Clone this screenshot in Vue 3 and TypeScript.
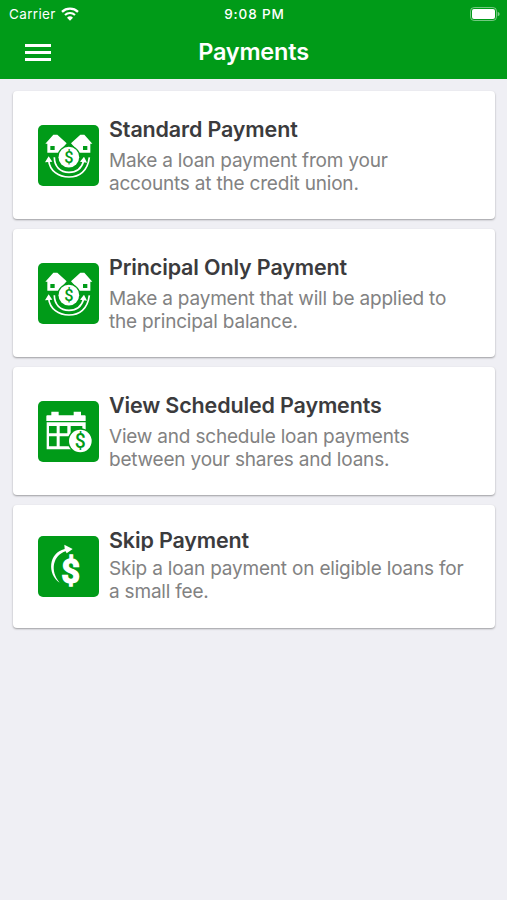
<script setup lang="ts">
type IconName = 'houses' | 'calendar' | 'skip'

interface PaymentOption {
  title: string
  lines: string[]
  icon: IconName
  compact?: boolean
}

const options: PaymentOption[] = [
  {
    title: 'Standard Payment',
    lines: ['Make a loan payment from your', 'accounts at the credit union.'],
    icon: 'houses',
  },
  {
    title: 'Principal Only Payment',
    lines: ['Make a payment that will be applied to', 'the principal balance.'],
    icon: 'houses',
  },
  {
    title: 'View Scheduled Payments',
    lines: ['View and schedule loan payments', 'between your shares and loans.'],
    icon: 'calendar',
  },
  {
    title: 'Skip Payment',
    lines: ['Skip a loan payment on eligible loans for', 'a small fee.'],
    icon: 'skip',
    compact: true,
  },
]
</script>

<template>
  <div class="screen">
    <header class="header">
      <div class="status">
        <div class="carrier">
          <span>Carrier</span>
          <svg class="wifi" viewBox="0 0 54 42">
            <path d="M3 14.5A35 35 0 0 1 51 14.5" fill="none" stroke="#fff" stroke-width="7" />
            <path d="M12 24A22 22 0 0 1 42 24" fill="none" stroke="#fff" stroke-width="6.5" />
            <path d="M27 41 18 32A13 13 0 0 1 36 32Z" fill="#fff" />
          </svg>
        </div>
        <span class="time">9:08 PM</span>
        <div class="power">
          <svg class="battery" viewBox="0 0 90 42">
            <rect x="1.5" y="1.5" width="78" height="39" rx="11" fill="none" stroke="#fff" stroke-opacity=".45" stroke-width="3" />
            <rect x="6" y="6" width="69" height="30" rx="6" fill="#fff" />
            <path d="M83 14q6 2 6 7t-6 7Z" fill="#fff" fill-opacity=".5" />
          </svg>
        </div>
      </div>
      <div class="navbar">
        <button class="menu" aria-label="Menu"><i /><i /><i /></button>
        <h1>Payments</h1>
        <span />
      </div>
    </header>

    <main class="list">
      <article v-for="option in options" :key="option.title" class="card" :class="{ compact: option.compact }">
        <svg class="tile" viewBox="0 0 183 183">
          <rect width="183" height="183" rx="15" fill="#009b18" />
          <g v-if="option.icon === 'houses'">
            <g v-for="side in 2" :key="side" :transform="side === 2 ? 'translate(185 0) scale(-1 1)' : undefined">
              <path d="M22 56 46 29H58L86 55 76 66V83H28V56Z" fill="#fff" />
              <rect x="37" y="63" width="13" height="12" fill="#009b18" />
            </g>
            <circle cx="92.500" cy="96.500" r="35" fill="#009b18" />
            <path d="M32 106C35 138 62 156 93 156S149 138 154 97" fill="none" stroke="#fff" stroke-width="5" />
            <path d="M49 97C49 125 67 142 93 142S132 126 137 108" fill="none" stroke="#fff" stroke-width="5" />
            <path d="M32 94 21 112 43 110ZM138 95 126 110 147 113Z" fill="#fff" />
            <circle cx="92.500" cy="96.500" r="31" fill="#fff" />
            <text x="92.500" y="113" class="dollar">$</text>
          </g>
          <g v-else-if="option.icon === 'calendar'">
            <path d="M40 32H62V44H40ZM107 32H129V44H107ZM25 46Q25 43 28 43H140Q143 43 143 46V60H25Z" fill="#fff" />
            <path d="M26 64H143V145H26ZM33 75V97H56V75ZM65 75V97H88V75ZM98 75V97H133V75ZM33 106V136H56V106ZM65 106V136H94V106Z" fill="#fff" fill-rule="evenodd" />
            <circle cx="127" cy="120" r="38" fill="#009b18" />
            <circle cx="127" cy="120" r="34" fill="#fff" />
            <text x="127" y="140" class="dollar large">$</text>
          </g>
          <g v-else>
            <path d="M65 140C27 115 31 50 80 39L79 26 104 39 86 52 83 46C46 57 34 104 65 140Z" fill="#fff" />
            <text x="98" y="142" class="dollar symbol">$</text>
          </g>
        </svg>
        <div class="copy">
          <h2>{{ option.title }}</h2>
          <p><span v-for="line in option.lines" :key="line">{{ line }}</span></p>
        </div>
      </article>
    </main>
  </div>
</template>

<style>
body {
  background: #efeff4;
}
</style>

<style scoped>
.screen {
  min-height: 900px;
  background: #efeff4;
  font-family: Inter, "Liberation Sans", sans-serif;
}

.header {
  height: 79px;
  background: #009b18;
  color: #fff;
}

.status {
  display: grid;
  grid-template-columns: 1fr auto 1fr;
  align-items: center;
  height: 27px;
  padding: 0 7px 0 9px;
  font-size: 13.500px;
}

.carrier {
  display: flex;
  align-items: center;
  gap: 5px;
  letter-spacing: 0.35px;
}

.wifi {
  width: 18px;
  height: 14px;
}

.time {
  font-size: 13.500px;
  font-weight: 500;
  letter-spacing: 0.9px;
}

.power {
  display: flex;
  justify-content: flex-end;
}

.battery {
  width: 30px;
  height: 14px;
}

.navbar {
  display: grid;
  grid-template-columns: 1fr auto 1fr;
  align-items: center;
  height: 50px;
  padding: 0 25px;
}

.menu {
  display: flex;
  flex-direction: column;
  gap: 4px;
  width: 26px;
  padding: 0;
  border: 0;
  background: none;
}

.menu i {
  height: 3px;
  background: #fff;
}

h1 {
  margin: 0 0 2px;
  font-size: 23.500px;
  font-weight: 600;
  letter-spacing: -0.2px;
}

.list {
  display: flex;
  flex-direction: column;
  gap: 10px;
  padding: 12.400px 12px 0 13px;
}

.card {
  display: flex;
  align-items: center;
  gap: 10px;
  height: 128px;
  padding-left: 25px;
  box-sizing: border-box;
  border-radius: 4px;
  background: #fff;
  box-shadow: 0 1px 2px rgba(0, 0, 0, 0.35);
}

.card.compact {
  height: 122.500px;
}

.tile {
  flex: none;
  width: 61px;
  height: 61px;
}

.copy {
  align-self: flex-start;
  padding-top: 25px;
  white-space: nowrap;
}

h2 {
  margin: 0;
  height: 32.500px;
  line-height: 27px;
  color: #3b3b3d;
  font-size: 21.500px;
  font-weight: 600;
  letter-spacing: -0.15px;
}

p {
  margin: 0;
  color: #828282;
  font-size: 19px;
  line-height: 23.300px;
  letter-spacing: -0.2px;
}

p span {
  display: block;
}

.compact .copy {
  padding-top: 22px;
}

.compact h2 {
  height: 23.500px;
  margin-bottom: 6px;
  overflow: hidden;
}

.dollar {
  fill: #009b18;
  font-family: Roboto, "Liberation Sans", sans-serif;
  font-size: 49px;
  font-weight: 500;
  text-anchor: middle;
}

.dollar.large {
  font-size: 58px;
}

.dollar.symbol {
  fill: #fff;
  stroke: #fff;
  stroke-width: 4px;
  font-size: 98px;
  font-weight: 700;
}
</style>
